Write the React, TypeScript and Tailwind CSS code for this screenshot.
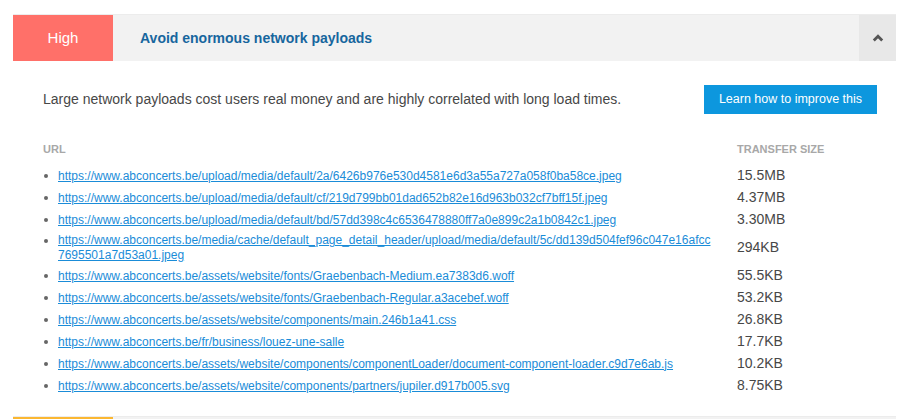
import React from "react";

const rows: { url: string; size: string }[] = [
  { url: "https://www.abconcerts.be/upload/media/default/2a/6426b976e530d4581e6d3a55a727a058f0ba58ce.jpeg", size: "15.5MB" },
  { url: "https://www.abconcerts.be/upload/media/default/cf/219d799bb01dad652b82e16d963b032cf7bff15f.jpeg", size: "4.37MB" },
  { url: "https://www.abconcerts.be/upload/media/default/bd/57dd398c4c6536478880ff7a0e899c2a1b0842c1.jpeg", size: "3.30MB" },
  { url: "https://www.abconcerts.be/media/cache/default_page_detail_header/upload/media/default/5c/dd139d504fef96c047e16afcc7695501a7d53a01.jpeg", size: "294KB" },
  { url: "https://www.abconcerts.be/assets/website/fonts/Graebenbach-Medium.ea7383d6.woff", size: "55.5KB" },
  { url: "https://www.abconcerts.be/assets/website/fonts/Graebenbach-Regular.a3acebef.woff", size: "53.2KB" },
  { url: "https://www.abconcerts.be/assets/website/components/main.246b1a41.css", size: "26.8KB" },
  { url: "https://www.abconcerts.be/fr/business/louez-une-salle", size: "17.7KB" },
  { url: "https://www.abconcerts.be/assets/website/components/componentLoader/document-component-loader.c9d7e6ab.js", size: "10.2KB" },
  { url: "https://www.abconcerts.be/assets/website/components/partners/jupiler.d917b005.svg", size: "8.75KB" },
];

export default function App() {
  return (
    <div
      className="w-[903px] h-[419px] overflow-hidden bg-white pt-[14px]"
      style={{ fontFamily: '"Liberation Sans", Arial, Helvetica, sans-serif' }}
    >
      <div className="ml-[13px] w-[883px] border-t border-[#ececec]">
        {/* header */}
        <div className="flex h-[46px] bg-[#f2f2f2]">
          <div className="w-[100px] flex items-center justify-center bg-[#ff7069] text-white text-[15px]">
            High
          </div>
          <div className="flex-1 flex items-center pl-[27px] text-[14px] font-bold text-[#17669e]">
            Avoid enormous network payloads
          </div>
          <div className="w-[37px] flex items-center justify-center bg-[#e8e8e8]">
            <svg width="12" height="8" viewBox="0 0 12 8">
              <polyline points="1.8,6.5 6,2.3 10.2,6.5" fill="none" stroke="#555" strokeWidth="2.8" />
            </svg>
          </div>
        </div>
        {/* body */}
        <div className="pl-[30px] pr-[19px] pt-[24px] pb-[20px]">
          <div className="flex items-center justify-between h-[29px]">
            <p className="text-[14px] text-[#474747]">
              Large network payloads cost users real money and are highly correlated with long load times.
            </p>
            <button className="w-[173px] h-[29px] bg-[#0d97de] text-white text-[12.5px]">
              Learn how to improve this
            </button>
          </div>
          <div className="flex mt-[27px] h-[15px] items-center text-[11px] font-bold text-[#a8a8a8] leading-[14px]">
            <div className="w-[694px]">URL</div>
            <div>TRANSFER SIZE</div>
          </div>
          <ul className="mt-[8px]">
            {rows.map((r) => (
              <li key={r.url} className="flex items-center">
                <div className="w-[694px] flex items-start pr-[21px] pt-[3px] pb-[1px]">
                  <div className="h-[15px] w-[15px] flex items-center pl-[1px] shrink-0">
                    <span className="block w-[4px] h-[4px] rounded-full bg-[#666]" />
                  </div>
                  <a
                    href="#"
                    className="text-[12px] leading-[15px] text-[#1a8cd8] underline break-all"
                  >
                    {r.url}
                  </a>
                </div>
                <div className="text-[14px] leading-[22px] text-[#474747]">{r.size}</div>
              </li>
            ))}
          </ul>
        </div>
      </div>
      {/* next panel */}
      <div className="ml-[13px] w-[883px] border-t border-[#ececec]">
        <div className="flex h-[46px] bg-[#f2f2f2]">
          <div className="w-[100px] bg-[#fbb731]" />
        </div>
      </div>
    </div>
  );
}
